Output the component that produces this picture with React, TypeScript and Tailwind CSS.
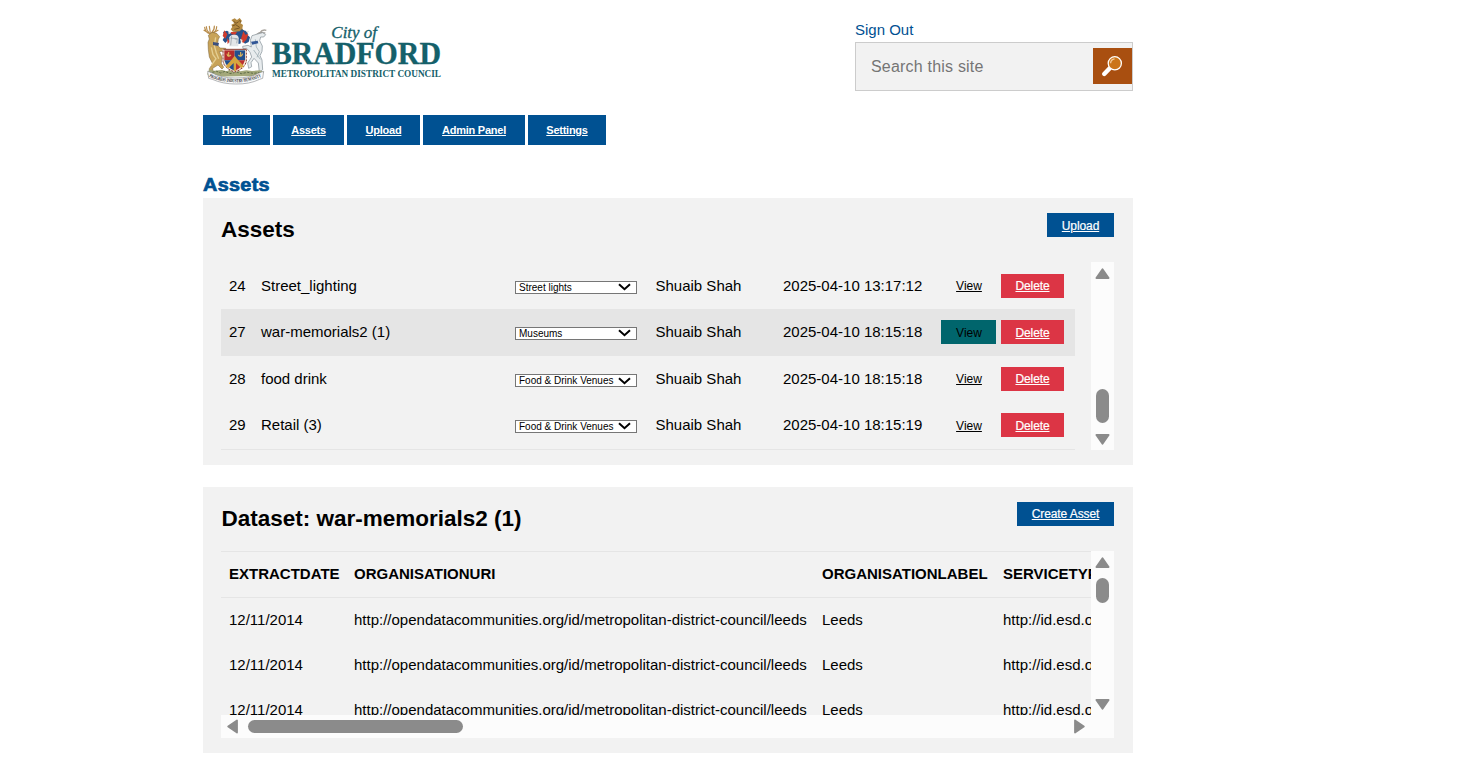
import React from "react";

const navItems = [
  { label: "Home", width: "w-[67px]" },
  { label: "Assets", width: "w-[71px]" },
  { label: "Upload", width: "w-[73px]" },
  { label: "Admin Panel", width: "w-[102px]" },
  { label: "Settings", width: "w-[78px]" },
];

const assets = [
  { id: 24, name: "Street_lighting", type: "Street lights", time: "2025-04-10 13:17:12", height: "h-[47px]", lift: "mt-px", active: false },
  { id: 27, name: "war-memorials2 (1)", type: "Museums", time: "2025-04-10 18:15:18", height: "h-[47px] pb-[2px]", lift: "mt-px pt-px", active: true },
  { id: 28, name: "food drink", type: "Food & Drink Venues", time: "2025-04-10 18:15:18", height: "h-[46px]", lift: "mt-0", active: false },
  { id: 29, name: "Retail (3)", type: "Food & Drink Venues", time: "2025-04-10 18:15:19", height: "h-[47px] pb-[2px]", lift: "mt-px pt-px", active: false },
];

const datasetRows = [0, 1, 2];

function Logo() {
  return (
    <svg width="248" height="80" viewBox="24 0 744 240" role="img" aria-label="City of Bradford Metropolitan District Council">
      {/* lion crest */}
      <path d="M109 30l10-5 7 5 8-6 7 9-5 6 8 6-2 10 4 8-8 4-24-2-7-7 5-7-3-7 9-4z" fill="#b48a42" />
      <path d="M116 34l7 6 8-5M112 48l10-4 12 8M118 58l16-4M134 30l3 8" stroke="#6b4c20" strokeWidth="2.5" fill="none" />
      {/* mantling */}
      <path d="M84 66l12-4 10 6 10-2 18-2 6-6 10 4 10 2-3 10 8 8-4 14-11 5-10-12-4 12-30 2-6-14-9 10-8-9 6-11z" fill="#27528c" />
      <path d="M88 61l9 12-6 13-8-8M96 84l8 10-6 9M145 64l6 10 9-2-5 16-11 12-6-14zM108 66l18 0-5 8-12-1z" fill="#cf3b2e" />
      <path d="M152 63l9-1-3 8zM100 64l8 5-7 4zM135 86l8 4-5 8z" fill="#eee3d8" />
      <path d="M103 82q3-9 16-8 12 1 12 11l-1 24-27 0z" fill="#e3e6e8" />
      <path d="M106 84l22 2M110 78l-3 28M119 87l8 1-2 12" stroke="#8b949d" strokeWidth="2" fill="none" />
      {/* stag supporter */}
      <path d="M29 52q2 16 16 19M34 50q0 10 8 18M43 49l3 20M27 61l10 6M65 50q0 14-14 20M58 48q1 11-8 20M69 61l-13 7" stroke="#b98d4c" strokeWidth="3.5" fill="none" strokeLinecap="round" />
      <path d="M40 76l11-9 14 3 9 10-4 8-3 17 8 9 17 1 1 7-20 3 8 16-2 19 7 12-5 5-12-12-16 10 2 17-13 4 1-20 10-15-10-20-3-22-1-22 4-10z" fill="#c8a358" stroke="#765f35" strokeWidth="1.5" />
      <path d="M62 82l-4 25 6 22 7 17M49 112l5 22 9 12-14 20" stroke="#e5cf93" strokeWidth="4" fill="none" />
      <path d="M54 96l18 3-2 9-16-3z" fill="#3c4f7d" />
      {/* angora goat supporter */}
      <path d="M183 75l10-7 18 1M194 69q8-12 20-8" stroke="#a9a49e" strokeWidth="4" fill="none" />
      <path d="M171 77l13-4 19-5 9 6-6 7-9 0-3 11 8 16-1 16-6 13 6 13 2 29-10 7-3-27-13-14-9 13 2 12-9 5-3-16 12-18-5-14-10-12-11 1-1-7 16-3 10 5-3-20z" fill="#e8ecee" stroke="#7f8b92" strokeWidth="2" />
      <path d="M181 88l3 23 9 14-7 17M176 120l9 13 11 15" stroke="#9faeb5" strokeWidth="2.5" fill="none" />
      <path d="M168 95l20-3 2 8-18 4z" fill="#315696" />
      {/* compartment */}
      <path d="M43 178l14 4 24-2 14 4 16-8 25 8 18-3 17 2 24-2 11 5-5 12-160 2-4-8z" fill="#a3a87a" />
      <path d="M52 187l13-3 12 5 13-5 15 7 20-5 14 5 18-4 18 3 19-2" stroke="#5e6c48" strokeWidth="3" fill="none" strokeDasharray="7 4" />
      {/* shield */}
      <path d="M84 118h70v36q-4 22-35 32-31-10-35-32z" fill="#f7ecd8" stroke="#8a3a32" strokeWidth="3" />
      <path d="M88 121h31v30H88z" fill="#b52b2d" />
      <path d="M119 121h31v30h-31z" fill="#22508f" />
      <path d="M88 151h31v31q-25-9-31-31z" fill="#22508f" />
      <path d="M119 151h31q-6 22-31 31z" fill="#bd3030" />
      <path d="M119 137l-8 11-20 22 9 5 16-16 0 23h7v-23l16 16 8-6-20-21z" fill="#d6a63f" />
      <path d="M96 131q2 13 12 4M130 135q9 9 13-4M101 126v12M137 126v12" stroke="#deb55a" strokeWidth="3.5" fill="none" />
      <path d="M84 118v33q4 25 35 35 31-10 35-35v-33" stroke="#f4efe6" strokeWidth="3" fill="none" strokeDasharray="5 5" />
      {/* motto ribbon */}
      <path d="M38 184l16 6q25 14 67 14 46 0 69-14l16-6-3 21-9 3q-31 15-72 14-39 0-70-14l-11-3z" fill="#fafafa" stroke="#73777a" strokeWidth="1.6" />
      <path id="motto-line" d="M42 200q35 17 80 17 43 0 80-18" fill="none" />
      <text fontFamily="Liberation Serif, serif" fontWeight="700" fontSize="15" fill="#2d2d2f">
        <textPath href="#motto-line" textLength="162" lengthAdjust="spacingAndGlyphs">PROGRESS INDUSTRY HUMANITY</textPath>
      </text>
      {/* wordmark */}
      <g fill="#14606a" fontFamily="Liberation Serif, serif">
        <text x="409" y="83" fontSize="51" fontStyle="italic" textLength="137" lengthAdjust="spacingAndGlyphs" stroke="#14606a" strokeWidth="1">City of</text>
        <text x="230" y="163" fontSize="95" fontWeight="700" textLength="508" lengthAdjust="spacingAndGlyphs" stroke="#14606a" strokeWidth="1">BRADFORD</text>
        <text x="231" y="200" fontSize="31" fontWeight="700" textLength="507" lengthAdjust="spacingAndGlyphs">METROPOLITAN DISTRICT COUNCIL</text>
      </g>
    </svg>
  );
}

function SearchIcon() {
  return (
    <svg width="39" height="36" viewBox="0 0 39 36">
      <path d="M11.2 26l5.3-5.6" stroke="#fff" strokeWidth="4.4" strokeLinecap="round" />
      <path d="M15.5 21.5l3-3" stroke="#fff" strokeWidth="2" />
      <circle cx="21.8" cy="15.3" r="6.6" fill="#cb7418" stroke="#fff" strokeWidth="1.3" />
      <path d="M17.6 15.2q.2-3.8 4-4.3" stroke="#f3c896" strokeWidth="1.3" fill="none" />
    </svg>
  );
}

function Arrow({ dir }: { dir: "up" | "down" | "left" | "right" }) {
  const turn = { up: "", down: "rotate-180", left: "-rotate-90", right: "rotate-90" }[dir];
  return (
    <svg width="15" height="11" viewBox="0 0 15 11" className={turn}>
      <path d="M7.5 1.2L13.6 10H1.4z" fill="#8b8b8b" stroke="#8b8b8b" strokeWidth="1.8" strokeLinejoin="round" />
    </svg>
  );
}

function BlueButton({ label, size }: { label: string; size: string }) {
  return (
    <a className={`flex h-6 items-center justify-center bg-[#005192] text-xs tracking-[-0.1px] text-white underline [-webkit-text-stroke:0.2px_white] ${size}`}>{label}</a>
  );
}

export default function App() {
  return (
    <div className="h-[779px] overflow-hidden bg-white font-['Liberation_Sans',Arial,sans-serif] text-[15px] leading-[22px] text-black">
      <div className="ml-[203px] w-[930px]">
        <header className="flex h-[115px] items-start justify-between pt-[10px]">
          <Logo />
          <div className="w-[278px] pt-[9px]">
            <a className="block h-[23px] text-[#005192]">Sign Out</a>
            <div className="flex h-[49px] items-start border border-[#ccc] bg-[#f2f2f2]">
              <div className="flex-1 pt-[13px] pl-[15px] text-base leading-[22px] tracking-[0.2px] text-[#757575]">Search this site</div>
              <button className="mt-[5px] h-9 w-[39px] bg-[#a94f10]">
                <SearchIcon />
              </button>
            </div>
          </div>
        </header>

        <nav className="flex h-[30px] gap-[3px]">
          {navItems.map((item) => (
            <a key={item.label} className={`flex items-center justify-center bg-[#005192] text-[11px] font-bold tracking-[-0.25px] text-white underline ${item.width}`}>
              {item.label}
            </a>
          ))}
        </nav>

        <div className="flex h-[53px] items-end">
          <h1 className="mb-[2px] origin-left scale-x-[1.1] text-[18px] leading-[22px] font-bold tracking-[0.3px] text-[#005192] [-webkit-text-stroke:0.7px_#005192]">Assets</h1>
        </div>

        <section className="h-[267px] bg-[#f2f2f2] pr-[19px] pl-[18px]">
          <div className="flex h-16 items-start justify-between pt-[15px]">
            <h2 className="text-[22.5px] leading-[34px] font-bold">Assets</h2>
            <BlueButton label="Upload" size="w-[67px] pt-px" />
          </div>
          <div className="flex h-[188px] justify-between">
            <div className="w-[854px]">
              <div className="h-[188px] border-b border-[#e5e5e5]">
                {assets.map((row) => (
                  <div key={row.id} className={`flex items-center ${row.height} ${row.active ? "bg-[#e5e5e5]" : ""}`}>
                    <span className="w-8 pl-2">{row.id}</span>
                    <span className="w-[254px] pl-2">{row.name}</span>
                    <div className="mr-[18px] ml-2 mt-[3px] flex h-[13px] w-[122px] items-center justify-between border border-[#767676] bg-white pr-[5px] pl-[3px] text-[10px] leading-[11px]">
                      <span className="whitespace-nowrap">{row.type}</span>
                      <svg width="13" height="8" viewBox="0 0 13 8">
                        <path d="M1 1.2l5.5 5 5.5-5" fill="none" stroke="#000" strokeWidth="2" />
                      </svg>
                    </div>
                    <span className="w-[128px] pl-[0.5px]">Shuaib Shah</span>
                    <span className="w-[158px]">{row.time}</span>
                    <a className={`mr-[5px] flex h-6 w-[55px] items-center justify-center pl-px text-xs ${row.lift} ${row.active ? "bg-[#00656c]" : "underline"}`}>View</a>
                    <a className={`flex h-6 w-[63px] items-center justify-center bg-[#dc3545] text-xs tracking-[-0.1px] text-white underline [-webkit-text-stroke:0.2px_white] ${row.lift}`}>Delete</a>
                  </div>
                ))}
              </div>
            </div>
            <div className="flex w-[23px] flex-col items-center bg-[#fcfcfc] pt-[6px] pb-[5px]">
              <Arrow dir="up" />
              <div className="mt-[110px] mb-auto h-[34px] w-[13px] rounded-full bg-[#8b8b8b]" />
              <Arrow dir="down" />
            </div>
          </div>
        </section>

        <section className="mt-[22px] h-[266px] bg-[#f2f2f2] pr-[19px] pl-[18px]">
          <div className="flex h-16 items-start justify-between pt-[15px]">
            <h2 className="pl-[0.5px] text-[22.5px] leading-[34px] font-bold">Dataset: war-memorials2 (1)</h2>
            <BlueButton label="Create Asset" size="w-[97px]" />
          </div>
          <div className="flex h-[164px]">
            <div className="w-[870px] overflow-hidden whitespace-nowrap">
              <div className="w-[1100px]">
                <div className="flex h-[47px] items-center border-y border-[#e5e5e5] pb-[2px] pl-2 font-bold">
                  <span className="w-[125px]">EXTRACTDATE</span>
                  <span className="w-[468px]">ORGANISATIONURI</span>
                  <span className="w-[181px]">ORGANISATIONLABEL</span>
                  <span>SERVICETYPEURI</span>
                </div>
                {datasetRows.map((row) => (
                  <div key={row} className="flex h-[45px] items-center pb-[2px] pl-2">
                    <span className="w-[125px]">12/11/2014</span>
                    <span className="w-[468px]">http://opendatacommunities.org/id/metropolitan-district-council/leeds</span>
                    <span className="w-[181px]">Leeds</span>
                    <span>http://id.esd.org.uk</span>
                  </div>
                ))}
              </div>
            </div>
            <div className="flex w-[23px] flex-col items-center bg-[#fcfcfc] pt-[6px] pb-[5px]">
              <Arrow dir="up" />
              <div className="mt-[10px] mb-auto h-[25px] w-[13px] rounded-full bg-[#8b8b8b]" />
              <Arrow dir="down" />
            </div>
          </div>
          <div className="flex h-[23px] items-center bg-[#fcfcfc] pr-[27px] pl-1">
            <Arrow dir="left" />
            <div className="mr-auto ml-2 h-[13px] w-[215px] rounded-full bg-[#8b8b8b]" />
            <Arrow dir="right" />
          </div>
        </section>
      </div>
    </div>
  );
}
